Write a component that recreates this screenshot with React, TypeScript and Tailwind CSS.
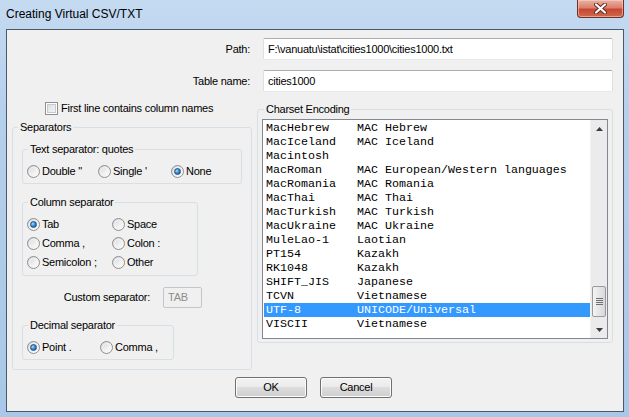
import React from "react";

const Radio = ({ checked }: { checked?: boolean }) => (
  <span className="relative inline-flex w-[13px] h-[13px] shrink-0 rounded-full border border-[#8e8f8f] bg-[linear-gradient(135deg,#cfd1d4_0%,#f0f0f0_55%,#ffffff_100%)] items-center justify-center">
    <span className="absolute inset-[1px] rounded-full border border-[#f4f4f4]" />
    {checked && (
      <span className="relative w-[7px] h-[7px] rounded-full border border-[#1b4f86] bg-[radial-gradient(circle_at_35%_35%,#a8dcff_0%,#3b8fd6_45%,#174f8c_100%)]" />
    )}
  </span>
);

const RadioItem = ({
  label,
  checked,
  className,
}: {
  label: string;
  checked?: boolean;
  className?: string;
}) => (
  <div className={"flex items-center gap-[2px] h-[13px] " + (className ?? "")}>
    <Radio checked={checked} />
    <span className="whitespace-pre">{label}</span>
  </div>
);

const Group = ({
  title,
  className,
  legendClass,
  children,
}: {
  title: string;
  className?: string;
  legendClass?: string;
  children: React.ReactNode;
}) => (
  <fieldset className={"border border-[#d5dfe5] rounded-[3px] min-w-0 " + (className ?? "")}>
    <legend className={"px-[2px] leading-[13px] " + (legendClass ?? "ml-[5px]")}>{title}</legend>
    {children}
  </fieldset>
);

const rows: [string, string][] = [
  ["MacHebrew", "MAC Hebrew"],
  ["MacIceland", "MAC Iceland"],
  ["Macintosh", ""],
  ["MacRoman", "MAC European/Western languages"],
  ["MacRomania", "MAC Romania"],
  ["MacThai", "MAC Thai"],
  ["MacTurkish", "MAC Turkish"],
  ["MacUkraine", "MAC Ukraine"],
  ["MuleLao-1", "Laotian"],
  ["PT154", "Kazakh"],
  ["RK1048", "Kazakh"],
  ["SHIFT_JIS", "Japanese"],
  ["TCVN", "Vietnamese"],
  ["UTF-8", "UNICODE/Universal"],
  ["VISCII", "Vietnamese"],
];

const TextInput = ({ value, className }: { value: string; className?: string }) => (
  <div
    className={
      "h-[22px] bg-white border border-[#dbdfe6] border-t-[#abadb3] border-b-[#e3e9ef] rounded-[2px] flex items-center pl-[4px] whitespace-pre " +
      (className ?? "")
    }
  >
    {value}
  </div>
);

const Button = ({ label }: { label: string }) => (
  <div className="w-[72px] h-[21px] border border-[#707070] rounded-[3px] bg-[linear-gradient(to_bottom,#f2f2f2_0%,#ebebeb_50%,#dddddd_50%,#cfcfcf_100%)] flex items-center justify-center shadow-[inset_0_0_0_1px_#fcfcfc]">
    {label}
  </div>
);

export default function App() {
  return (
    <div className="w-[629px] h-[417px] flex flex-col bg-[linear-gradient(to_bottom,#c4daf1_0%,#b4cfec_30%,#a9c7e8_100%)] font-['Liberation_Sans',Arial,sans-serif] text-[11px] leading-[13px] text-black tracking-[-0.25px] overflow-hidden">
      {/* title bar */}
      <div className="h-[29px] flex items-start shrink-0">
        <span className="mt-[7px] ml-[6px] text-[12px] leading-[14px] tracking-[0px]">Creating Virtual CSV/TXT</span>
        <div className="ml-auto mr-[5px] w-[47px] h-[18px] rounded-b-[4px] border border-t-0 border-[#6e3027] bg-[linear-gradient(to_bottom,#eab2a4_0%,#dc806c_45%,#c8472f_55%,#cf6a4f_100%)] flex items-center justify-center shadow-[inset_0_0_0_1px_rgba(255,220,210,0.5)]">
          <svg width="13" height="11" viewBox="0 0 13 11">
            <path d="M2 1.5 L11 9.5 M11 1.5 L2 9.5" stroke="#5a2a22" strokeWidth="4" strokeLinecap="round" />
            <path d="M2 1.5 L11 9.5 M11 1.5 L2 9.5" stroke="#ffffff" strokeWidth="2.2" strokeLinecap="round" />
          </svg>
        </div>
      </div>

      {/* client */}
      <div className="ml-[6px] w-[618px] h-[383px] border border-[#4b5868] bg-[#f0f0f0] flex flex-col shrink-0">
        <div className="mt-[8px] flex items-center">
          <span className="w-[243px] text-right">Path:</span>
          <TextInput value="F:\vanuatu\istat\cities1000\cities1000.txt" className="ml-[13px] w-[350px]" />
        </div>
        <div className="mt-[10px] flex items-center">
          <span className="w-[243px] text-right">Table name:</span>
          <TextInput value="cities1000" className="ml-[13px] w-[350px]" />
        </div>

        <div className="flex items-start">
          {/* left column */}
          <div className="ml-[5px] w-[240px] mt-[10px] flex flex-col">
            <div className="pl-[33px] flex items-center gap-[3px] h-[13px]">
              <span className="w-[13px] h-[13px] border border-[#8e8f8f] bg-white flex items-center justify-center">
                <span className="w-[9px] h-[9px] border border-[#c6c9cd] bg-[linear-gradient(135deg,#dcdfe3_0%,#f4f4f4_100%)]" />
              </span>
              <span>First line contains column names</span>
            </div>

            <Group title="Separators" className="mt-[6px] w-[240px]">
              <Group title="Text separator: quotes" className="mt-[9px] ml-[9px] w-[220px]" legendClass="ml-[5px]">
                <div className="mt-[9px] mb-[5px] pl-[4px] flex">
                  <RadioItem label={'Double "'} className="w-[71px]" />
                  <RadioItem label="Single '" className="w-[73px]" />
                  <RadioItem label="None" checked />
                </div>
              </Group>

              <Group title="Column separator" className="mt-[12px] ml-[9px] w-[176px]">
                <div className="mt-[9px] mb-[6px] pl-[4px] flex flex-col gap-[6px]">
                  <div className="flex">
                    <RadioItem label="Tab" checked className="w-[85px]" />
                    <RadioItem label="Space" />
                  </div>
                  <div className="flex">
                    <RadioItem label="Comma ," className="w-[85px]" />
                    <RadioItem label="Colon :" />
                  </div>
                  <div className="flex">
                    <RadioItem label="Semicolon ;" className="w-[85px]" />
                    <RadioItem label="Other" />
                  </div>
                </div>
              </Group>

              <div className="mt-[11px] flex items-center h-[21px]">
                <span className="w-[137px] text-right">Custom separator:</span>
                <div className="ml-[13px] w-[39px] h-[21px] border border-[#c3c6cb] rounded-[2px] bg-[#f0f0f0] text-[#8d8d8d] flex items-center pl-[4px]">
                  TAB
                </div>
              </div>

              <Group title="Decimal separator" className="mt-[11px] mb-[9px] ml-[9px] w-[152px]">
                <div className="mt-[9px] mb-[5px] pl-[4px] flex">
                  <RadioItem label="Point ." checked className="w-[73px]" />
                  <RadioItem label="Comma ," />
                </div>
              </Group>
            </Group>
          </div>

          {/* right column */}
          <div className="ml-[5px] w-[356px] mt-[11px]">
            <Group title="Charset Encoding" className="w-[356px]" legendClass="ml-[6px]">
              <div className="ml-[4px] mt-[3px] mb-[3px] w-[346px] h-[220px] border border-[#828790] bg-white flex">
                <div className="flex-1 pt-[1px] pl-[1px] font-['Liberation_Mono','Courier_New',monospace] text-[11.67px] tracking-[0px]">
                  {rows.map(([a, b]) => {
                    const sel = a === "UTF-8";
                    return (
                      <div
                        key={a}
                        className={
                          "h-[14px] pl-[2px] flex items-center whitespace-pre " +
                          (sel ? "bg-[#3399ff] text-white" : "text-black")
                        }
                      >
                        <span className="w-[91px] shrink-0">{a}</span>
                        <span>{b}</span>
                      </div>
                    );
                  })}
                </div>
                <div className="w-[17px] bg-[#ebebeb] flex flex-col border-l border-[#f2f2f2]">
                  <div className="h-[17px] flex items-center justify-center">
                    <svg width="7" height="4" viewBox="0 0 7 4">
                      <polygon points="3.5,0 7,4 0,4" fill="#3c3c3c" />
                    </svg>
                  </div>
                  <div className="flex-1 flex flex-col justify-end">
                    <div className="mx-[1px] mb-[4px] h-[31px] border border-[#9a9a9a] rounded-[2px] bg-[linear-gradient(to_right,#f4f4f4_0%,#e6e6e6_50%,#d8d8d8_100%)] flex flex-col items-center justify-center gap-[1px]">
                      <span className="w-[7px] h-[1px] bg-[#6f6f6f]" />
                      <span className="w-[7px] h-[1px] bg-[#6f6f6f]" />
                      <span className="w-[7px] h-[1px] bg-[#6f6f6f]" />
                      <span className="w-[7px] h-[1px] bg-[#6f6f6f]" />
                    </div>
                  </div>
                  <div className="h-[17px] flex items-center justify-center">
                    <svg width="7" height="4" viewBox="0 0 7 4">
                      <polygon points="0,0 7,0 3.5,4" fill="#3c3c3c" />
                    </svg>
                  </div>
                </div>
              </div>
            </Group>
          </div>
        </div>

        <div className="mt-[7px] pl-[228px] flex gap-[13px]">
          <Button label="OK" />
          <Button label="Cancel" />
        </div>
      </div>
    </div>
  );
}
